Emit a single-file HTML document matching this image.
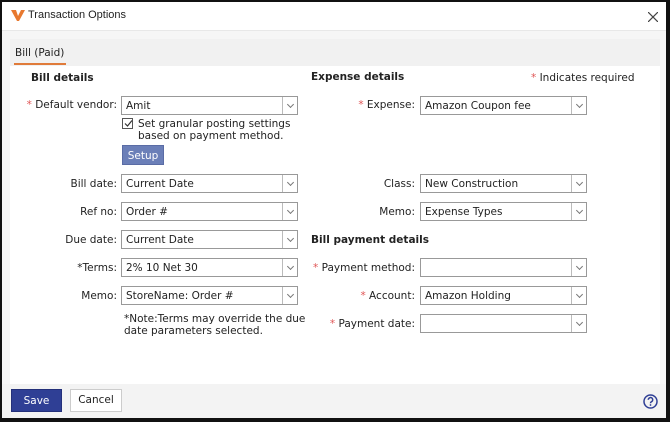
<!DOCTYPE html>
<html><head><style>
*{margin:0;padding:0;box-sizing:border-box}
body{width:670px;height:422px;overflow:hidden;background:#111;font-family:"DejaVu Sans","Liberation Sans",sans-serif;font-size:10.5px;color:#222;position:relative}
.win{position:absolute;left:2px;top:2px;width:664px;height:416px;background:#f6f6f6}
.title{position:absolute;left:0;top:0;width:664px;height:29px;background:#fff;border-bottom:1px solid #e8e8e8}
.title span{position:absolute;left:26px;top:7px;font-family:"Liberation Sans",sans-serif;font-size:11px;color:#222}
.tabs{position:absolute;left:8px;top:37px;width:650px;height:27px;background:#f1f1f1}
.tab{position:absolute;left:5px;top:8px;font-size:10.5px}
.tabline{position:absolute;left:4px;top:24px;width:52px;height:2px;background:#e07b3a}
.body{position:absolute;left:8px;top:64px;width:650px;height:318px;background:#fff}
.foot{position:absolute;left:0;top:382px;width:664px;height:34px;background:#f3f3f3}
.a{position:absolute;white-space:nowrap}
.h{font-weight:bold;font-size:10.5px}
.lbl{text-align:right;margin-top:1px}
.r{color:#e05555}
.sel{position:absolute;height:19px;border:1px solid #999;background:#fff;padding:3px 4px 1px;font-size:10.5px}
.sel:after{content:"";position:absolute;right:0;top:0;width:14px;height:17px;border-left:1px solid #bbb}
.sel i{position:absolute;right:4px;top:5px;width:5px;height:5px;border-right:1px solid #777;border-bottom:1px solid #777;transform:rotate(45deg)}
</style></head><body>
<div class="win">
<div class="title">
<svg style="position:absolute;left:9px;top:8px" width="14" height="11" viewBox="0 0 14 11"><path d="M0 0h5l2 6 3-6h4l-6 11h-2z" fill="#e8792f"/></svg>
<span>Transaction Options</span>
<svg style="position:absolute;left:646px;top:10px" width="10" height="10" viewBox="0 0 10 10"><path d="M0 0L10 10M10 0L0 10" stroke="#444" stroke-width="1.2"/></svg>
</div>
<div class="tabs"><div class="tab">Bill (Paid)</div><div class="tabline"></div></div>
<div class="body"></div>
<div class="foot"></div>
</div>

<div class="a h" style="left:31px;top:72px">Bill details</div>
<div class="a h" style="left:311px;top:71px">Expense details</div>
<div class="a" style="left:531px;top:72px"><span class="r">*</span> Indicates required</div>

<div class="a lbl" style="right:553px;top:98px"><span class="r">*</span> Default vendor:</div>
<div class="sel" style="left:121px;top:96px;width:177px">Amit<i></i></div>
<div class="a" style="left:122px;top:118px;width:11px;height:11px;border:1px solid #555;background:#fff"></div>
<svg class="a" style="left:124px;top:119px" width="9" height="9" viewBox="0 0 9 9"><path d="M1 4.5L3.5 7L8 1.5" stroke="#333" stroke-width="1.2" fill="none"/></svg>
<div class="a" style="left:138px;top:118px;line-height:12px">Set granular posting settings<br>based on payment method.</div>
<div class="a" style="left:122px;top:145px;width:42px;height:20px;background:#6b7fb8;color:#fff;text-align:center;line-height:20px;border:1px solid #5a6ca5">Setup</div>

<div class="a lbl" style="right:553px;top:177px">Bill date:</div>
<div class="sel" style="left:121px;top:174px;width:177px">Current Date<i></i></div>
<div class="a lbl" style="right:553px;top:205px">Ref no:</div>
<div class="sel" style="left:121px;top:202px;width:177px">Order #<i></i></div>
<div class="a lbl" style="right:553px;top:233px">Due date:</div>
<div class="sel" style="left:121px;top:230px;width:177px">Current Date<i></i></div>
<div class="a lbl" style="right:553px;top:261px">*Terms:</div>
<div class="sel" style="left:121px;top:258px;width:177px">2% 10 Net 30<i></i></div>
<div class="a lbl" style="right:553px;top:289px">Memo:</div>
<div class="sel" style="left:121px;top:286px;width:177px">StoreName: Order #<i></i></div>
<div class="a" style="left:124px;top:313px;line-height:12px">*Note:Terms may override the due<br>date parameters selected.</div>

<div class="a lbl" style="right:255px;top:98px"><span class="r">*</span> Expense:</div>
<div class="sel" style="left:420px;top:96px;width:167px">Amazon Coupon fee<i></i></div>
<div class="a lbl" style="right:255px;top:177px">Class:</div>
<div class="sel" style="left:420px;top:174px;width:167px">New Construction<i></i></div>
<div class="a lbl" style="right:255px;top:205px">Memo:</div>
<div class="sel" style="left:420px;top:202px;width:167px">Expense Types<i></i></div>
<div class="a h" style="left:311px;top:234px">Bill payment details</div>
<div class="a lbl" style="right:255px;top:261px"><span class="r">*</span> Payment method:</div>
<div class="sel" style="left:420px;top:258px;width:167px"><i></i></div>
<div class="a lbl" style="right:255px;top:289px"><span class="r">*</span> Account:</div>
<div class="sel" style="left:420px;top:286px;width:167px">Amazon Holding<i></i></div>
<div class="a lbl" style="right:255px;top:317px"><span class="r">*</span> Payment date:</div>
<div class="sel" style="left:420px;top:314px;width:167px"><i></i></div>

<div class="a" style="left:11px;top:389px;width:51px;height:23px;background:#2f3f95;color:#fff;text-align:center;line-height:23px;border:1px solid #24307a">Save</div>
<div class="a" style="left:70px;top:389px;width:52px;height:23px;background:#fff;text-align:center;line-height:21px;border:1px solid #ccc">Cancel</div>
<svg class="a" style="left:643px;top:394px" width="15" height="15" viewBox="0 0 15 15"><circle cx="7.5" cy="7.5" r="6.5" fill="none" stroke="#2f3f95" stroke-width="1.5"/><path d="M5.3 5.8a2.2 2.2 0 1 1 3 2c-.7.3-.8.7-.8 1.5" fill="none" stroke="#2f3f95" stroke-width="1.5"/><circle cx="7.5" cy="11" r=".9" fill="#2f3f95"/></svg>
</body></html>
